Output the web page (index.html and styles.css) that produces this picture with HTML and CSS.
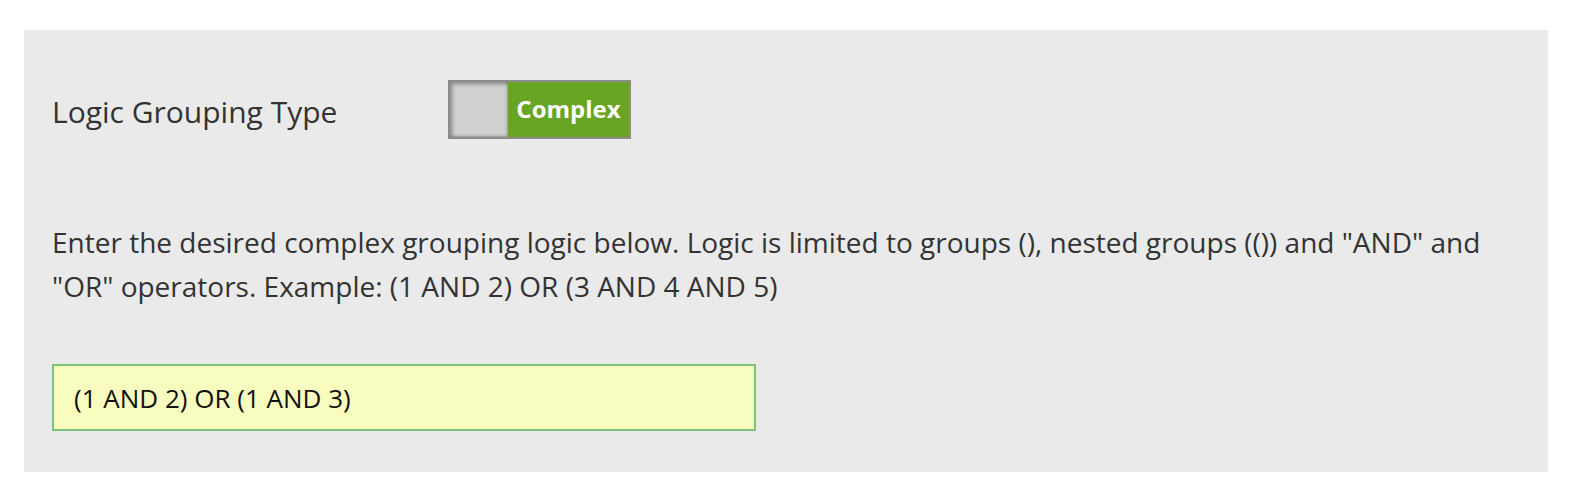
FILE: index.html
```html
<!DOCTYPE html>
<html>
<head>
<meta charset="utf-8">
<link rel="stylesheet" href="styles.css">
</head>
<body>
<div class="panel">
  <div class="row">
    <div class="label">Logic Grouping Type</div>
    <div class="toggle">
      <div class="knob"></div>
      <div class="state">Complex</div>
    </div>
  </div>
  <p class="help">Enter the desired complex grouping logic below. Logic is limited to groups (), nested groups (()) and "AND" and "OR" operators. Example: (1 AND 2) OR (3 AND 4 AND 5)</p>
  <div class="logic-input">(1 AND 2) OR (1 AND 3)</div>
</div>
</body>
</html>
```
FILE: styles.css
```css
html, body {
  margin: 0;
  padding: 0;
  background: #ffffff;
}
body {
  font-family: "Open Sans", "Liberation Sans", sans-serif;
  color: #333333;
}
.panel {
  margin: 30px 26px 22px 24px;
  background: #eaeaea;
  padding: 50px 28px 41px 28px;
  height: 442px;
  box-sizing: border-box;
}
.row {
  display: flex;
  align-items: center;
}
.label {
  width: 396px;
  font-size: 30px;
  padding-top: 4px;
  color: #333333;
}
.toggle {
  display: flex;
  width: 183px;
  height: 59px;
  box-sizing: border-box;
  border: 2px solid #8c8c8c;
  background: #67a523;
}
.knob {
  width: 58px;
  background: #d0d0d0;
  box-shadow: inset 2px 2px 4px rgba(0,0,0,0.35), inset -1px -1px 3px rgba(0,0,0,0.25);
}
.state {
  flex: 1;
  display: flex;
  align-items: center;
  justify-content: center;
  color: #ffffff;
  font-weight: 700;
  font-size: 24px;
  padding-bottom: 2px;
}
.help {
  margin: 81px 0 0 0;
  font-size: 28px;
  line-height: 44px;
  color: #333333;
}
.logic-input {
  margin-top: 56px;
  width: 704px;
  height: 67px;
  box-sizing: border-box;
  border: 2px solid #7cc47a;
  background: #f9fcbf;
  color: #111111;
  font-size: 26px;
  padding: 0 20px;
  display: flex;
  align-items: center;
}
```
